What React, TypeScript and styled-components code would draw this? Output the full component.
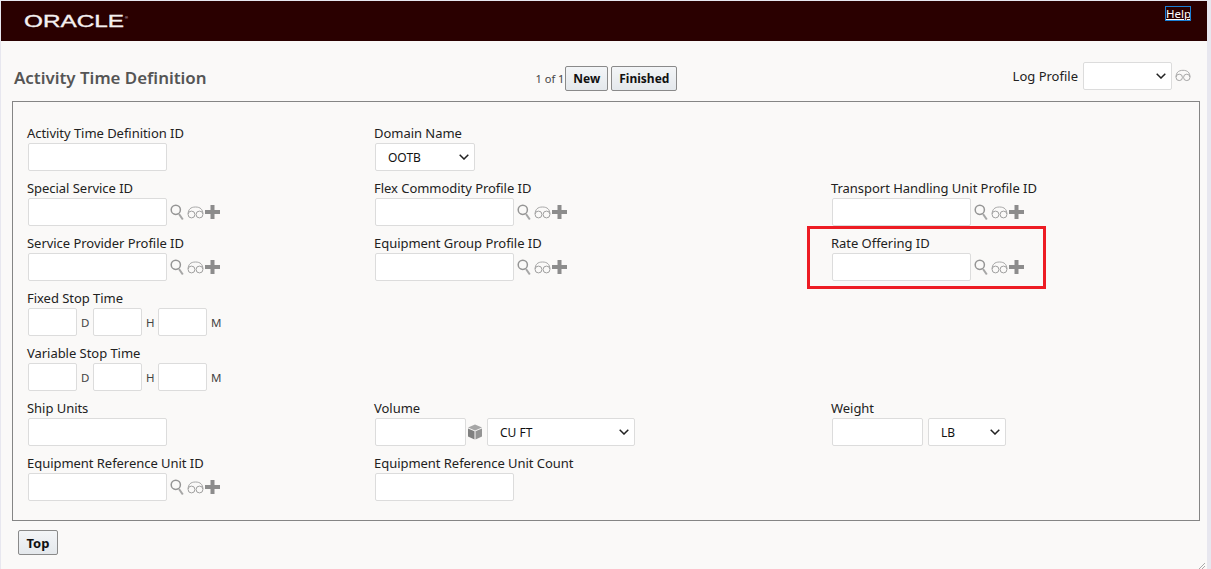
import React from "react";
import styled, { createGlobalStyle } from "styled-components";

const chevron =
  "url(\"data:image/svg+xml,%3Csvg xmlns='http://www.w3.org/2000/svg' width='10' height='6' viewBox='0 0 10 6'%3E%3Cpath d='M0.7 0.7 L5 5 L9.3 0.7' fill='none' stroke='%23222' stroke-width='1.5'/%3E%3C/svg%3E\")";

const Global = createGlobalStyle`
  html, body { margin: 0; padding: 0; height: 100%; overflow: hidden; background: #e7e7ef; }
  #root { height: 100%; }
`;
const Frame = styled.div`
  height: 568px; margin: 1px 4px 0 1px; background: #faf9f8; position: relative;
  font-family: "Noto Sans", "Open Sans", sans-serif; color: #1a1a1a;
`;
const Header = styled.header`
  height: 40px; background: #2a0000; display: flex; justify-content: space-between; align-items: flex-start;
`;
const LogoBox = styled.svg`
  width: 110px; height: 20px; margin: 11px 0 0 22px; display: block;
`;
const HelpLink = styled.a`
  margin: 6px 17px 0 0; height: 13px; line-height: 13px; padding: 0; font-size: 11.5px; color: #fff;
  text-decoration: underline; outline: 1px solid #1a7fd4; outline-offset: 0; width: 24px; text-align: center;
`;
const TitleRow = styled.div`
  height: 60px; display: grid; grid-template-columns: 1fr auto 1fr; align-items: center; padding: 0 16px 0 13px;
`;
const Title = styled.h1`
  margin: 12px 0 0; font-size: 16.9px; font-weight: 600; color: #555; white-space: nowrap;
`;
const Pager = styled.div`
  display: flex; align-items: center; gap: 3px; justify-self: center; margin: 14px 0 0 8px;
`;
const PagerText = styled.span`
  font-size: 11px; color: #444; margin-right: -2px;
`;
const PushButton = styled.button<{ $big?: boolean }>`
  height: 25px; padding: 0 ${(p) => (p.$big ? 7.5 : 7)}px; font: 700 ${(p) => (p.$big ? 13 : 12)}px "Noto Sans", sans-serif; color: #111;
  background: linear-gradient(#f3f5f7, #e4e8ec); border: 1px solid #8a8a8a; border-radius: 2px;
  display: block;
`;
const LogArea = styled.div`
  display: flex; align-items: center; justify-self: end; gap: 3px; margin-top: 9px;
`;
const FormBox = styled.section`
  margin: 0 7px 0 11px; border: 1px solid #858585; height: 420px; box-sizing: border-box;
  padding: 22px 0 0 14px; display: grid; grid-template-columns: 347px 457px 1fr; grid-auto-rows: 55px;
`;
const Field = styled.div<{ $span?: string }>`
  position: relative; display: flex; flex-direction: column; align-items: flex-start;
  ${(p) => (p.$span ? `grid-column: ${p.$span};` : "")}
`;
const Label = styled.label`
  font-size: 13px; line-height: 18px; height: 19px; color: #222; white-space: nowrap; letter-spacing: -0.04px;
`;
const Row = styled.div`
  display: flex; align-items: center; margin-left: 1px;
`;
const TextInput = styled.input<{ $w?: number }>`
  width: ${(p) => p.$w ?? 139}px; height: 28px; box-sizing: border-box; background: #fff;
  border: 1px solid #dcdcdc; border-radius: 2px; padding: 0 4px; display: block;
`;
const Select = styled.select<{ $w: number; $ml?: number }>`
  width: ${(p) => p.$w}px; height: 28px; box-sizing: border-box;
  appearance: none; background: #fff ${chevron} no-repeat right 5px center;
  border: 1px solid #dcdcdc; border-radius: 2px; padding: 0 0 0 12px; margin-left: ${(p) => p.$ml ?? 0}px;
  font: 12px "Noto Sans", sans-serif; color: #111;
`;
const Icons = styled.div`
  display: flex; align-items: center; margin-left: 3px; height: 28px;
`;
const Unit = styled.span`
  width: 16px; padding-left: 4px; box-sizing: border-box; font-size: 11.5px; color: #444; margin-top: 1px;
`;
const Log = styled.span`
  font-size: 13px; color: #222; margin-right: 2px;
`;
const Highlight = styled.div`
  position: absolute; left: -24px; top: -8px; width: 239px; height: 63px; box-sizing: border-box;
  border: 3px solid #ed1c24; pointer-events: none;
`;
const TopWrap = styled.div`
  padding: 9px 0 0 17px;
`;
const Grip = styled.svg`
  position: absolute; right: 2px; bottom: 0; width: 6px; height: 6px;
`;

const Search = () => (
  <svg width="16" height="18" viewBox="0 0 16 18" fill="none">
    <circle cx="5.8" cy="6.8" r="4.6" stroke="#959595" strokeWidth="1.5" />
    <path d="M9 11 L12.8 16.5" stroke="#a6a6a6" strokeWidth="2" />
  </svg>
);
const Glasses = ({ ml = 1, w = 17 }: { ml?: number; w?: number }) => (
  <svg width={w} height="13" viewBox="0 0 17 13" fill="none" style={{ marginLeft: ml }}>
    <circle cx="4.5" cy="8.5" r="3.4" stroke="#a0a0a0" />
    <circle cx="12.5" cy="8.5" r="3.4" stroke="#a0a0a0" />
    <path d="M1 8 C1.3 3.5 3.5 1 8.5 1 C13.5 1 15.7 3.5 16 8" stroke="#a8a8a8" />
  </svg>
);
const Plus = () => (
  <svg width="15" height="14" viewBox="0 0 15 14" style={{ marginLeft: 1 }}>
    <path d="M5.5 0 H9.5 V5 H15 V9 H9.5 V14 H5.5 V9 H0 V5 H5.5 Z" fill="#8c8c8c" />
  </svg>
);
const Cube = () => (
  <svg width="14" height="16" viewBox="0 0 14 16" style={{ margin: "0 5px 0 2px" }}>
    <path d="M7 0.5 L14 3.5 L7 6.5 L0 3.5 Z" fill="#a6a6a6" />
    <path d="M0 4.5 L6.5 7.3 V15.5 L0 12.6 Z" fill="#808080" />
    <path d="M14 4.5 L7.5 7.3 V15.5 L14 12.6 Z" fill="#949494" />
  </svg>
);
const Tools = () => (
  <Icons>
    <Search />
    <Glasses />
    <Plus />
  </Icons>
);

const Lookup = ({ label, children }: { label: string; children?: React.ReactNode }) => (
  <Field>
    <Label>{label}</Label>
    <Row>
      <TextInput />
      <Tools />
    </Row>
    {children}
  </Field>
);
const Duration = ({ label }: { label: string }) => (
  <Field $span="1 / -1">
    <Label>{label}</Label>
    <Row>
      <TextInput $w={49} />
      <Unit>D</Unit>
      <TextInput $w={49} />
      <Unit>H</Unit>
      <TextInput $w={49} />
      <Unit>M</Unit>
    </Row>
  </Field>
);

export default function App() {
  return (
    <>
      <Global />
      <Frame>
        <Header>
          <LogoBox viewBox="0 0 110 20">
            <text x="1" y="15" fontFamily="'Liberation Sans', sans-serif" fontSize="17" fill="#f4f0f0" stroke="#f4f0f0" strokeWidth="0.35" textLength="100" lengthAdjust="spacingAndGlyphs">ORACLE</text>
            <text x="102" y="7" fontFamily="'Liberation Sans', sans-serif" fontSize="4" fill="#f4f0f0">®</text>
          </LogoBox>
          <HelpLink href="#">Help</HelpLink>
        </Header>
        <TitleRow>
          <Title>Activity Time Definition</Title>
          <Pager>
            <PagerText>1 of 1</PagerText>
            <PushButton>New</PushButton>
            <PushButton>Finished</PushButton>
          </Pager>
          <LogArea>
            <Log>Log Profile</Log>
            <Select $w={89}><option></option></Select>
            <Glasses ml={0} w={16} />
          </LogArea>
        </TitleRow>
        <FormBox>
          <Field>
            <Label>Activity Time Definition ID</Label>
            <Row><TextInput /></Row>
          </Field>
          <Field $span="2 / 4">
            <Label>Domain Name</Label>
            <Row><Select $w={100}><option>OOTB</option></Select></Row>
          </Field>

          <Lookup label="Special Service ID" />
          <Lookup label="Flex Commodity Profile ID" />
          <Lookup label="Transport Handling Unit Profile ID" />

          <Lookup label="Service Provider Profile ID" />
          <Lookup label="Equipment Group Profile ID" />
          <Lookup label="Rate Offering ID"><Highlight /></Lookup>

          <Duration label="Fixed Stop Time" />
          <Duration label="Variable Stop Time" />

          <Field>
            <Label>Ship Units</Label>
            <Row><TextInput /></Row>
          </Field>
          <Field>
            <Label>Volume</Label>
            <Row>
              <TextInput $w={91} />
              <Cube />
              <Select $w={148}><option>CU FT</option></Select>
            </Row>
          </Field>
          <Field>
            <Label>Weight</Label>
            <Row>
              <TextInput $w={91} />
              <Select $w={78} $ml={5}><option>LB</option></Select>
            </Row>
          </Field>

          <Lookup label="Equipment Reference Unit ID" />
          <Field>
            <Label>Equipment Reference Unit Count</Label>
            <Row><TextInput /></Row>
          </Field>
        </FormBox>
        <TopWrap>
          <PushButton $big>Top</PushButton>
        </TopWrap>
        <Grip viewBox="0 0 6 6"><path d="M0 6 L6 0 M3 6 L6 3" stroke="#aaa" /></Grip>
      </Frame>
    </>
  );
}
